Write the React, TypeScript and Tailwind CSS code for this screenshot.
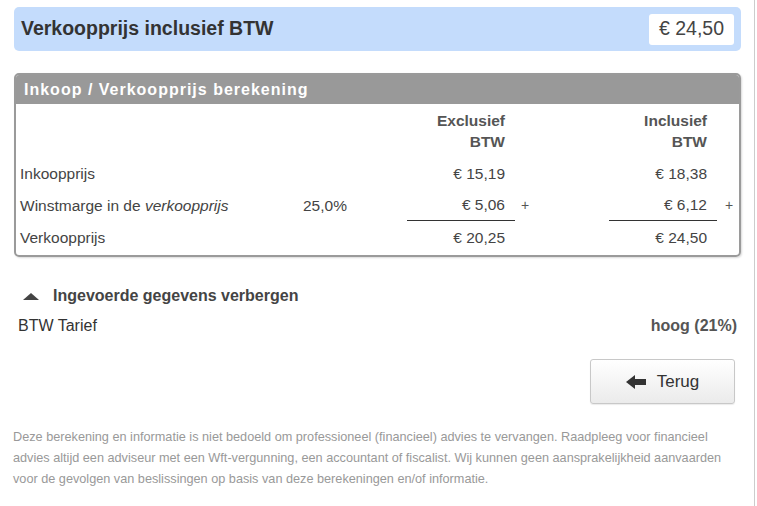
import { FC } from "react";

const ArrowLeft: FC = () => (
	<svg width="20" height="14" viewBox="0 0 20 14" className="fill-[#333]">
		<polygon points="0,7 9,0 9,14" />
		<rect x="8" y="4" width="12" height="6" />
	</svg>
);

const Plus: FC<{ pad: string }> = ({ pad }) => <div className={`${pad} text-[14px] text-[#555]`}>+</div>;

const App: FC = () => {
	return (
		<div className="w-[755px] min-h-[506px] border-r border-[#ccc] bg-white font-['Liberation_Sans',Arial,sans-serif] text-[#333]">
			<div className="pl-[14px] pr-[13px] pt-[7px]">
				{/* result bar */}
				<div className="flex h-[44px] items-center justify-between rounded-[5px] bg-[#c4dcfc] pl-[7px] pr-[7px]">
					<div className="text-[19.5px] font-bold text-[#333]">Verkoopprijs inclusief BTW</div>
					<div className="flex h-[31px] w-[85px] items-center justify-center rounded-[3px] bg-white text-[19.5px] text-[#444]">
						€ 24,50
					</div>
				</div>

				{/* calculation table */}
				<div className="mt-[22px] h-[184px] overflow-hidden rounded-[5px] border-2 border-[#9a9a9a] shadow-[1px_1px_2px_rgba(0,0,0,0.15)]">
					<div className="flex h-[29px] items-center bg-[#999] pl-[8px] text-[16px] font-bold tracking-[1px] text-white">
						Inkoop / Verkoopprijs berekening
					</div>
					<div className="grid grid-cols-[287px_104px_108px_94px_108px_1fr] text-[15.5px] leading-[21px] text-[#444]">
						<div className="pt-[6px]" />
						<div />
						<div className="pt-[6px] pr-[10px] text-right font-bold text-[#555]">
							Exclusief
							<br />
							BTW
						</div>
						<div />
						<div className="pt-[6px] pr-[10px] text-right font-bold text-[#555]">
							Inclusief
							<br />
							BTW
						</div>
						<div />

						<div className="mt-[5px] flex h-[32px] items-center pl-[4px]">Inkoopprijs</div>
						<div className="mt-[5px]" />
						<div className="mt-[5px] flex h-[32px] items-center justify-end pr-[10px]">€ 15,19</div>
						<div className="mt-[5px]" />
						<div className="mt-[5px] flex h-[32px] items-center justify-end pr-[10px]">€ 18,38</div>
						<div className="mt-[5px]" />

						<div className="flex h-[32px] items-center pl-[4px]">
							Winstmarge in de&nbsp;<i>verkoopprijs</i>
						</div>
						<div className="flex h-[32px] items-center">25,0%</div>
						<div className="flex h-[32px] items-center justify-end border-b border-[#333] pr-[10px]">€ 5,06</div>
						<div className="flex h-[32px] items-center">
							<Plus pad="pl-[6px]" />
						</div>
						<div className="flex h-[32px] items-center justify-end border-b border-[#333] pr-[10px]">€ 6,12</div>
						<div className="flex h-[32px] items-center">
							<Plus pad="pl-[8px]" />
						</div>

						<div className="flex h-[32px] items-center pl-[4px]">Verkoopprijs</div>
						<div />
						<div className="flex h-[32px] items-center justify-end pr-[10px]">€ 20,25</div>
						<div />
						<div className="flex h-[32px] items-center justify-end pr-[10px]">€ 24,50</div>
						<div />
					</div>
				</div>

				{/* entered data */}
				<div className="mt-[27px] flex items-center gap-[14px] pl-[9px]">
					<div className="h-0 w-0 border-x-[8px] border-b-[7px] border-x-transparent border-b-[#444]" />
					<div className="text-[16px] font-bold text-[#444]">Ingevoerde gegevens verbergen</div>
				</div>
				<div className="mt-[8px] flex items-center justify-between pl-[4px] pr-[4px] text-[16px] leading-[20px]">
					<div className="text-[#333]">BTW Tarief</div>
					<div className="font-bold text-[#555]">hoog (21%)</div>
				</div>

				<div className="mt-[23px] flex justify-end pr-[6px]">
					<button className="flex h-[45px] w-[145px] items-center justify-center gap-[11px] rounded-[3px] border border-[#c8c8c8] bg-gradient-to-b from-white to-[#ebebeb] text-[17px] text-[#333] shadow-[0_1px_1px_rgba(0,0,0,0.08)]">
						<ArrowLeft />
						<span>Terug</span>
					</button>
				</div>

				<p className="mt-[23px] -ml-[1px] w-[729px] whitespace-nowrap text-[12.7px] leading-[21px] text-[#999]">
					Deze berekening en informatie is niet bedoeld om professioneel (financieel) advies te vervangen. Raadpleeg voor financieel
					<br />
					advies altijd een adviseur met een Wft-vergunning, een accountant of fiscalist. Wij kunnen geen aansprakelijkheid aanvaarden
					<br />
					voor de gevolgen van beslissingen op basis van deze berekeningen en/of informatie.
				</p>
			</div>
		</div>
	);
};

export default App;
